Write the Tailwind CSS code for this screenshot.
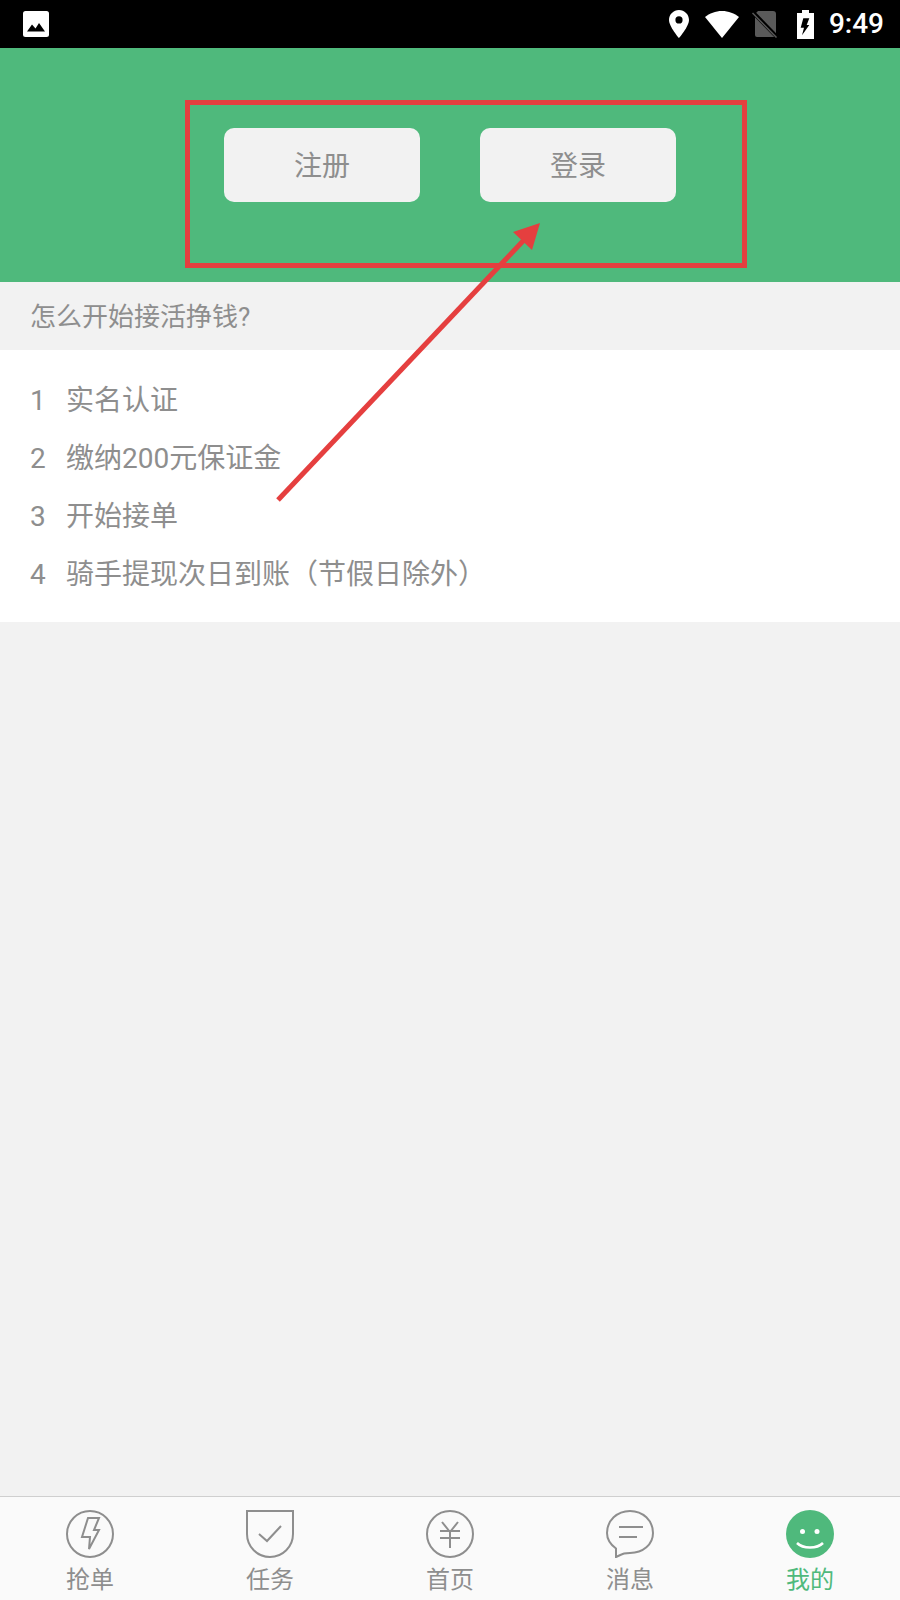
<!DOCTYPE html>
<html lang="zh">
<head>
  <meta charset="UTF-8">
  <meta name="viewport" content="width=device-width, initial-scale=1.0">
  <title>我的</title>
  <script src="https://cdn.jsdelivr.net/npm/@tailwindcss/browser@4"></script>
</head>
<body class="bg-[#f2f2f2] font-['Roboto','Noto_Sans_CJK_SC',sans-serif]">
  <div class="relative w-[900px] h-[1600px] flex flex-col overflow-hidden text-[#8e8e8e]">

    <!-- Status bar -->
    <header class="h-[48px] shrink-0 bg-black flex items-center justify-between pl-[23px] pr-[16px] text-white">
      <svg class="w-[26px] h-[26px]" viewBox="0 0 26 26">
        <rect width="26" height="26" rx="2.5" fill="#fff"/>
        <path d="M4 20.5 L9 13.5 L12.5 17.5 L16 12 L22 20.5 Z" fill="#000"/>
      </svg>
      <div class="flex items-center">
        <svg class="w-[20px] h-[28px] mr-[16px]" viewBox="0 0 20 28">
          <path fill-rule="evenodd" d="M10 0 C4.5 0 0 4.4 0 9.9 C0 16.5 10 28 10 28 C10 28 20 16.5 20 9.9 C20 4.4 15.5 0 10 0 Z M10 6.3 A3.6 3.6 0 1 1 10 13.5 A3.6 3.6 0 1 1 10 6.3 Z" fill="#fff"/>
        </svg>
        <svg class="w-[34px] h-[27px] mr-[13px]" viewBox="0 0 34 27">
          <path d="M17 27 L0 6 C4.5 2.4 10.500 0 17 0 C23.500 0 29.500 2.400 34 6 Z" fill="#fff"/>
        </svg>
        <svg class="w-[26px] h-[27px] mr-[19px]" viewBox="0 0 26 27">
          <path d="M6 0 H21 A3 3 0 0 1 24 3 V24 A2 2 0 0 1 22 26 H5 A2 2 0 0 1 3 24 V3 Z" fill="#5a5a5a"/>
          <path d="M1 1.500 L25 26" stroke="#000" stroke-width="4"/>
          <path d="M0.500 2 L24.500 26.500" stroke="#5a5a5a" stroke-width="1.500"/>
        </svg>
        <svg class="w-[17px] h-[29px] mr-[15px]" viewBox="0 0 17 29">
          <path d="M5 0 H12 V3 H17 V29 H0 V3 H5 Z" fill="#fff"/>
          <path d="M6.300 8.300 H12.300 L9.700 15 H12.300 L5 25.300 L7 17.700 H3.700 Z" fill="#000"/>
        </svg>
        <span class="text-[28px] leading-none font-medium">9:49</span>
      </div>
    </header>

    <!-- Login area -->
    <section class="h-[234px] shrink-0 bg-[#4fb97c] pl-[224px] pt-[80px]">
      <div class="flex gap-[60px]">
        <button class="w-[196px] h-[74px] pt-[4px] rounded-[10px] bg-[#f2f2f2] text-[28px]">注册</button>
        <button class="w-[196px] h-[74px] pt-[4px] rounded-[10px] bg-[#f2f2f2] text-[28px]">登录</button>
      </div>
    </section>

    <!-- Steps -->
    <div class="h-[68px] shrink-0 flex items-center pl-[30px] pt-[2px] text-[26px]">怎么开始接活挣钱?</div>
    <ol class="h-[272px] shrink-0 bg-white pt-[22px] px-[30px] text-[28px]">
      <li class="h-[58px] flex items-center"><span class="w-[36px]">1</span>实名认证</li>
      <li class="h-[58px] flex items-center"><span class="w-[36px]">2</span>缴纳200元保证金</li>
      <li class="h-[58px] flex items-center"><span class="w-[36px]">3</span>开始接单</li>
      <li class="h-[58px] flex items-center"><span class="w-[36px]">4</span>骑手提现次日到账（节假日除外）</li>
    </ol>

    <div class="flex-1"></div>

    <!-- Tab bar -->
    <nav class="h-[104px] shrink-0 bg-[#fafafa] border-t border-[#cfcfcf] grid grid-cols-5 pt-[13px] text-[24px]">
      <a class="flex flex-col items-center">
        <svg class="w-[48px] h-[48px]" viewBox="0 0 48 48" fill="none" stroke="#8e8e8e" stroke-width="2">
          <circle cx="24" cy="24" r="23"/>
          <path d="M22 8 H33 L28 20 H33 L23 39 L24 27 H16 Z"/>
        </svg>
        <span class="leading-[34px] mt-[5px]">抢单</span>
      </a>
      <a class="flex flex-col items-center">
        <svg class="w-[48px] h-[48px]" viewBox="0 0 48 48" fill="none" stroke="#8e8e8e" stroke-width="2">
          <path d="M1 1 H47 V24 A23 23 0 0 1 1 24 Z"/>
          <path d="M13 24 L21 31 L35 16"/>
        </svg>
        <span class="leading-[34px] mt-[5px]">任务</span>
      </a>
      <a class="flex flex-col items-center">
        <svg class="w-[48px] h-[48px]" viewBox="0 0 48 48" fill="none" stroke="#8e8e8e" stroke-width="2">
          <circle cx="24" cy="24" r="23"/>
          <path d="M16 12 L24 22 L32 12 M14 21 H34 M14 28 H34 M24 22 V38"/>
        </svg>
        <span class="leading-[34px] mt-[5px]">首页</span>
      </a>
      <a class="flex flex-col items-center">
        <svg class="w-[48px] h-[48px]" viewBox="0 0 48 48" fill="none" stroke="#8e8e8e" stroke-width="2">
          <path d="M10 47 V38.500 C4.500 34.500 1 29.500 1 23 C1 10.500 11 1 24 1 C37 1 47 10.500 47 23 C47 34.500 37 43 24 43 C19 43 18 43 10 47 Z"/>
          <path d="M13 17 H37 M13 27 H31"/>
        </svg>
        <span class="leading-[34px] mt-[5px]">消息</span>
      </a>
      <a class="flex flex-col items-center text-[#4fb97c]">
        <svg class="w-[48px] h-[48px]" viewBox="0 0 48 48" fill="none">
          <circle cx="24" cy="24" r="24" fill="#4fb97c"/>
          <circle cx="16.500" cy="21.500" r="2.500" fill="#fff"/>
          <circle cx="31" cy="21.500" r="2.500" fill="#fff"/>
          <path d="M11 33 C17 39 31 39 37 33" stroke="#fff" stroke-width="2.500"/>
        </svg>
        <span class="leading-[34px] mt-[5px]">我的</span>
      </a>
    </nav>

    <!-- Red annotation over the page -->
    <div class="absolute left-[185px] top-[100px] w-[562px] h-[168px] border-[5px] border-[#e53f3f]"></div>
    <svg class="absolute left-0 top-0 pointer-events-none" width="900" height="1600" viewBox="0 0 900 1600">
      <path d="M278 500 L524 240" stroke="#e53f3f" stroke-width="5" fill="none"/>
      <path d="M540 223 L513 232 L532 250 Z" fill="#e53f3f"/>
    </svg>
  </div>
</body>
</html>
